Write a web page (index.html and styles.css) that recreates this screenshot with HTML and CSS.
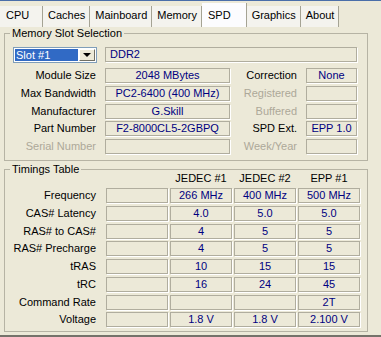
FILE: index.html
```html
<!DOCTYPE html>
<html lang="en">
<head>
    <meta charset="UTF-8">
    <meta name="viewport" content="width=device-width, initial-scale=1.0">
    <title>CPU-Z - SPD</title>
    <link rel="stylesheet" href="styles.css">
</head>
<body>
    <!-- Tabs -->
    <div class="tabs">
        <div class="tab first">CPU</div>
        <div class="tab">Caches</div>
        <div class="tab">Mainboard</div>
        <div class="tab">Memory</div>
        <div class="tab active">SPD</div>
        <div class="tab">Graphics</div>
        <div class="tab">About</div>
    </div>

    <div class="page">
        <!-- Memory Slot Selection -->
        <fieldset class="group">
            <legend>Memory Slot Selection</legend>
            <div class="slot-grid">
                <div class="combo">
                    <span class="combo-value">Slot #1</span>
                    <span class="combo-btn"><span class="arrow"></span></span>
                </div>
                <div class="field left wide">DDR2</div>

                <div class="label">Module Size</div>
                <div class="field">2048 MBytes</div>
                <div class="label">Correction</div>
                <div class="field">None</div>

                <div class="label">Max Bandwidth</div>
                <div class="field">PC2-6400 (400 MHz)</div>
                <div class="label disabled">Registered</div>
                <div class="field"></div>

                <div class="label">Manufacturer</div>
                <div class="field">G.Skill</div>
                <div class="label disabled">Buffered</div>
                <div class="field"></div>

                <div class="label">Part Number</div>
                <div class="field">F2-8000CL5-2GBPQ</div>
                <div class="label">SPD Ext.</div>
                <div class="field">EPP 1.0</div>

                <div class="label disabled">Serial Number</div>
                <div class="field"></div>
                <div class="label disabled">Week/Year</div>
                <div class="field"></div>
            </div>
        </fieldset>

        <!-- Timings Table -->
        <fieldset class="group timings">
            <legend>Timings Table</legend>
            <div class="timing-grid">
                <div></div>
                <div></div>
                <div class="head">JEDEC #1</div>
                <div class="head">JEDEC #2</div>
                <div class="head">EPP #1</div>

                <div class="label">Frequency</div>
                <div class="field"></div>
                <div class="field">266 MHz</div>
                <div class="field">400 MHz</div>
                <div class="field">500 MHz</div>

                <div class="label">CAS# Latency</div>
                <div class="field"></div>
                <div class="field">4.0</div>
                <div class="field">5.0</div>
                <div class="field">5.0</div>

                <div class="label">RAS# to CAS#</div>
                <div class="field"></div>
                <div class="field">4</div>
                <div class="field">5</div>
                <div class="field">5</div>

                <div class="label">RAS# Precharge</div>
                <div class="field"></div>
                <div class="field">4</div>
                <div class="field">5</div>
                <div class="field">5</div>

                <div class="label">tRAS</div>
                <div class="field"></div>
                <div class="field">10</div>
                <div class="field">15</div>
                <div class="field">15</div>

                <div class="label">tRC</div>
                <div class="field"></div>
                <div class="field">16</div>
                <div class="field">24</div>
                <div class="field">45</div>

                <div class="label">Command Rate</div>
                <div class="field"></div>
                <div class="field"></div>
                <div class="field"></div>
                <div class="field">2T</div>

                <div class="label">Voltage</div>
                <div class="field"></div>
                <div class="field">1.8 V</div>
                <div class="field">1.8 V</div>
                <div class="field">2.100 V</div>
            </div>
        </fieldset>
    </div>
</body>
</html>
```

FILE: styles.css
```css
* {
    box-sizing: border-box;
}

body {
    margin: 0;
    width: 381px;
    height: 337px;
    overflow: hidden;
    background: #ece9d8;
    border-top: 1px solid #4a6ea9;
    font-family: 'Liberation Sans', Arial, sans-serif;
    font-size: 11px;
    color: #000;
}

/* Tabs */
.tabs {
    display: flex;
    align-items: flex-end;
    height: 26px;
}

.tab {
    height: 21px;
    padding: 3px 4px 0 5px;
    line-height: 13px;
    background: #f4f3ee;
    border-right: 1px solid #a5a394;
    white-space: nowrap;
}

.tab.first {
    width: 43px;
    padding-left: 6px;
}

.tab.active {
    height: 24px;
    padding: 6px 15px 0 6px;
    background: #fcfcfe;
}

/* Group boxes */
.page {
    padding: 0 13px 0 4px;
    height: 310px;
    border-bottom: 2px solid #75726a;
}

.group {
    margin: 0;
    padding: 7px 9px 6px 0;
    border: 1px solid #b6b3a4;
    min-width: 0;
}

.group legend {
    margin-left: 5px;
    padding: 0 2px;
    line-height: 13px;
}

.timings {
    margin-top: 2px;
    padding-bottom: 4px;
}

.slot-grid {
    display: grid;
    grid-template-columns: 91px 125px 58px 51px;
    grid-template-rows: 18.25px repeat(5, 15px);
    column-gap: 9px;
    row-gap: 2.75px;
}

.timing-grid {
    display: grid;
    grid-template-columns: 99px repeat(4, 62px);
    grid-template-rows: 14.25px repeat(8, 15px);
    column-gap: 2px;
    row-gap: 2.75px;
    margin-top: -12px;
}

.timing-grid .label {
    padding-right: 8px;
}

.label {
    text-align: right;
    line-height: 15px;
    white-space: nowrap;
}

.label.disabled {
    color: #aca899;
}

.head {
    text-align: center;
    line-height: 14px;
    white-space: nowrap;
}

.field {
    height: 15px;
    border: 1px solid #b0ad9e;
    box-shadow: 1px 1px 0 #fff;
    line-height: 13px;
    text-align: center;
    color: #000080;
    white-space: nowrap;
    overflow: hidden;
}

.field.left {
    text-align: left;
    padding-left: 4px;
}

.field.wide {
    grid-column: 2 / 5;
}

/* Slot combo box */
.combo {
    display: flex;
    width: 84px;
    height: 16px;
    margin-left: 8px;
    padding: 1px;
    background: #fff;
    border: 1px solid #7f9db9;
}

.combo-value {
    flex: 1;
    padding-left: 1px;
    line-height: 12px;
    background: #316ac5;
    color: #fff;
}

.combo-btn {
    display: flex;
    align-items: center;
    justify-content: center;
    width: 16px;
    margin-left: 1px;
    background: #ece9d8;
    border: 1px solid;
    border-color: #fff #716f64 #716f64 #fff;
}

.arrow {
    width: 0;
    height: 0;
    border-left: 4px solid transparent;
    border-right: 4px solid transparent;
    border-top: 4px solid #000;
}
```
